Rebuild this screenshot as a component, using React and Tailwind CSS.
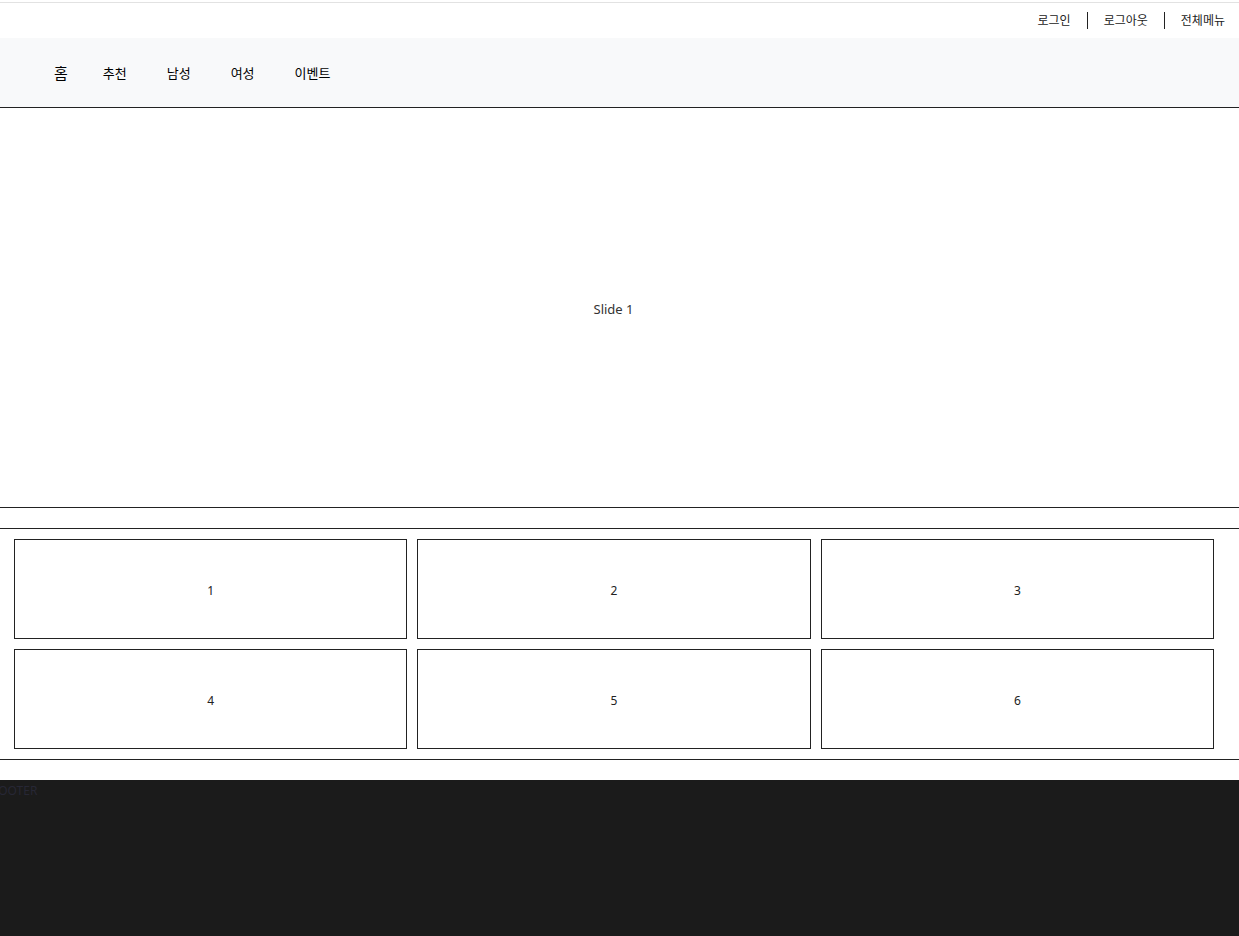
export default function App() {
  const font = { fontFamily: '"Noto Sans", "Noto Sans CJK KR", sans-serif' };
  const cards = [1, 2, 3, 4, 5, 6];

  return (
    <div className="bg-white text-[#222]" style={font}>
      {/* top utility bar */}
      <div className="mt-[2px] border-t border-[#e2e2e2] h-[36px] flex items-center justify-end pr-[14px] text-[12px] text-[#222]">
        <a className="px-[16px] leading-[16px]">로그인</a>
        <span className="w-px h-[17px] bg-[#222]" />
        <a className="px-[16px] leading-[16px]">로그아웃</a>
        <span className="w-px h-[17px] bg-[#222]" />
        <a className="pl-[16px] leading-[16px]">전체메뉴</a>
      </div>

      {/* main nav */}
      <nav className="bg-[#f8f9fa] h-[70px] border-b border-[#222] flex items-center pl-[54px] pt-[2px]">
        <a className="text-[15px] mr-[35px] text-black">홈</a>
        <a className="text-[13px] mr-[40px] text-black">추천</a>
        <a className="text-[13px] mr-[40px] text-black">남성</a>
        <a className="text-[13px] mr-[40px] text-black">여성</a>
        <a className="text-[13px] text-black">이벤트</a>
      </nav>

      {/* slider */}
      <section className="h-[400px] border-b border-[#222] flex items-center justify-center pr-[12px] pt-[4px] text-[13px] text-[#333]">
        Slide 1
      </section>

      {/* cards */}
      <section className="mt-[20px] border-t border-b border-[#222] pt-[10px] pb-[10px] pl-[14px] pr-[25px] grid grid-cols-3 gap-[10px]">
        {cards.map((n) => (
          <div key={n} className="h-[100px] border border-[#222] flex items-center justify-center pt-[4px] text-[12px] text-[#222]">
            {n}
          </div>
        ))}
      </section>

      {/* footer */}
      <footer className="mt-[20px] bg-[#1b1b1b] h-[156px] overflow-hidden">
        <div className="-ml-[8px] pt-[2px] text-[12px] text-[#272735] leading-[18px]">FOOTER</div>
      </footer>
    </div>
  );
}
